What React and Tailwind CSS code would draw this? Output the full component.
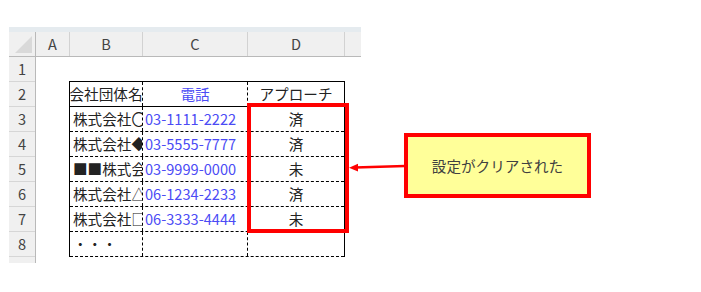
import React from 'react'

const rows = [
    { name: '株式会社〇', tel: '03-1111-2222', state: '済' },
    { name: '株式会社◆', tel: '03-5555-7777', state: '済' },
    { name: '■■株式会社', tel: '03-9999-0000', state: '未' },
    { name: '株式会社△', tel: '06-1234-2233', state: '済' },
    { name: '株式会社□', tel: '06-3333-4444', state: '未' },
    { name: '・・・', tel: '', state: '' },
]

function ColHead({ label, className }) {
    return (
        <div className={`flex items-center justify-center border-r border-[#d2d2d2] text-[#444] ${className}`}>
            {label}
        </div>
    )
}

function Sheet() {
    return (
        <div className="ml-[9px] mt-[27px] w-[352px] text-[14.6px] leading-none">
            <div className="h-[5px] bg-[#e5ebef]" />
            {/* column headers */}
            <div className="flex h-[25px] bg-[#f0f0f0] border-b border-[#b9b9b9]">
                <div className="w-[27px] shrink-0 border-r border-[#b9b9b9] flex items-end justify-end pb-[3px] pr-[3px]">
                    <svg width="17" height="17" viewBox="0 0 17 17">
                        <polygon points="0,17 17,17 17,0" fill="#d9d9d9" />
                    </svg>
                </div>
                <ColHead label="A" className="w-[34px] shrink-0" />
                <ColHead label="B" className="w-[73px] shrink-0" />
                <ColHead label="C" className="w-[105px] shrink-0" />
                <ColHead label="D" className="w-[97px] shrink-0" />
                <div className="flex-1" />
            </div>
            <div className="flex">
                {/* row numbers */}
                <div className="w-[27px] shrink-0 bg-[#f0f0f0] border-r border-[#b9b9b9] text-[#444]">
                    {[1, 2, 3, 4, 5, 6, 7, 8].map((n) => (
                        <div key={n} className="h-[25px] border-b border-[#d6d6d6] flex items-center justify-center">
                            {n}
                        </div>
                    ))}
                    <div className="h-[6px]" />
                </div>
                {/* cells */}
                <div className="flex-1 bg-white">
                    <div className="h-[24px]" />
                    <div className="ml-[33px] w-[276px] border-t border-l border-r border-black text-[#222]">
                        <div className="flex h-[25px] border-b border-black">
                            <div className="w-[73px] shrink-0 border-r border-dashed border-black flex items-center justify-center overflow-hidden whitespace-nowrap">
                                会社団体名
                            </div>
                            <div className="w-[105px] shrink-0 border-r border-dashed border-black flex items-center justify-center text-[#4b4bf5]">
                                電話
                            </div>
                            <div className="flex-1 flex items-center justify-center">アプローチ</div>
                        </div>
                        {rows.map((r, i) => (
                            <div key={i} className="flex h-[25px] border-b border-dashed border-black">
                                <div className="w-[73px] shrink-0 border-r border-dashed border-black flex items-center px-[3px] overflow-hidden whitespace-nowrap">
                                    {r.name}
                                </div>
                                <div className="w-[105px] shrink-0 border-r border-dashed border-black flex items-center px-[2px] text-[#4b4bf5] whitespace-nowrap">
                                    {r.tel}
                                </div>
                                <div className="flex-1 flex items-center justify-center">{r.state}</div>
                            </div>
                        ))}
                    </div>
                </div>
            </div>
        </div>
    )
}

export default function App() {
    return (
        <div className="relative w-[701px] h-[292px] overflow-hidden bg-white font-['Noto_Sans_CJK_JP',sans-serif]">
            <Sheet />

            {/* highlight around the status column */}
            <div className="absolute left-[247px] top-[103px] w-[102px] h-[130px] border-4 border-[#ff0000]" />

            {/* arrow from the note to the highlight */}
            <svg className="absolute left-[345px] top-[158px]" width="62" height="18" viewBox="0 0 62 18">
                <line x1="60" y1="8" x2="10" y2="9.6" stroke="#ff0000" strokeWidth="2.5" />
                <polygon points="4,9.8 13,5.8 13,13.6" fill="#ff0000" />
            </svg>

            <div className="absolute left-[404px] top-[133px] w-[187px] h-[65px] border-4 border-[#ff0000] bg-[#ffff99] flex items-center justify-center text-[14.6px] text-[#404040]">
                設定がクリアされた
            </div>
        </div>
    )
}
